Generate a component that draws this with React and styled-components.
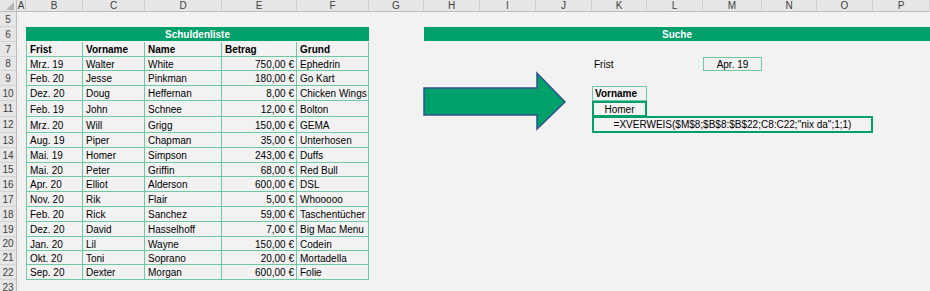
import React from "react";
import styled, { createGlobalStyle, css } from "styled-components";

const GlobalStyle = createGlobalStyle`
  html, body { margin: 0; padding: 0; background: #f2f2f2; overflow: hidden; }
  body { font-family: "Liberation Sans", Arial, sans-serif; }
`;

const COLS = [17, 9, 57, 62, 77, 75, 72, 55, 56, 56, 56, 55, 56, 59, 55, 56, 57];
const ROWS = [12, 15, 15, 15, 14, 15, 15, 16, 16, 15, 15, 14, 15, 15, 15, 15, 14, 14, 15, 15];
const LETTERS = ["A","B","C","D","E","F","G","H","I","J","K","L","M","N","O","P"];
const GREEN = "#00a06b";
const LIGHT = "#6ccaa2";

const Sheet = styled.div`
  position: relative;
  display: grid;
  grid-template-columns: ${COLS.map((c) => c + "px").join(" ")};
  grid-template-rows: ${ROWS.map((r) => r + "px").join(" ")};
  width: 930px;
  height: 291px;
  background: #f2f2f2;
  font-size: 10px;
  color: #000;
  overflow: hidden;
`;

const place = css`
  grid-column: ${(p) => p.$col} / span ${(p) => p.$span || 1};
  grid-row: ${(p) => p.$row};
`;

const ColHead = styled.div`
  ${place};
  background: #e6e6e6;
  border-right: 1px solid #cfcfcf;
  border-bottom: 1px solid #bdbdbd;
  box-sizing: border-box;
  display: flex;
  align-items: center;
  justify-content: center;
  font-size: 10px;
  color: #404040;
`;

const Corner = styled.div`
  ${place};
  background: #e6e6e6;
  border-right: 1px solid #bdbdbd;
  border-bottom: 1px solid #bdbdbd;
  box-sizing: border-box;
  display: flex;
  align-items: flex-end;
  justify-content: flex-end;
  padding: 0 2px 1px 0;
`;

const RowHead = styled.div`
  ${place};
  background: #e6e6e6;
  border-right: 1px solid #bdbdbd;
  border-bottom: 1px solid #d4d4d4;
  box-sizing: border-box;
  display: flex;
  align-items: center;
  justify-content: center;
  font-size: 10px;
  color: #404040;
`;

const Banner = styled.div`
  ${place};
  background: ${GREEN};
  color: #fff;
  font-weight: bold;
  display: flex;
  align-items: center;
  justify-content: center;
  margin-bottom: 1px;
`;

const Cell = styled.div`
  ${place};
  box-sizing: border-box;
  border-right: 1px solid ${LIGHT};
  border-bottom: 1px solid ${LIGHT};
  border-left: ${(p) => (p.$first ? `1px solid ${LIGHT}` : "none")};
  display: flex;
  align-items: center;
  justify-content: ${(p) => (p.$right ? "flex-end" : "flex-start")};
  padding: 1px 2px 0 3px;
  font-weight: ${(p) => (p.$bold ? "bold" : "normal")};
  white-space: nowrap;
  overflow: hidden;
`;

const Label = styled.div`
  ${place};
  display: flex;
  align-items: center;
  padding-left: 2px;
`;

const Box = styled.div`
  ${place};
  box-sizing: border-box;
  border: ${(p) => (p.$strong ? `2px solid ${GREEN}` : `1px solid ${LIGHT}`)};
  margin-top: ${(p) => (p.$overlap ? "-1px" : "0")};
  display: flex;
  align-items: center;
  justify-content: ${(p) => (p.$left ? "flex-start" : "center")};
  padding-left: ${(p) => (p.$left ? "2px" : "0")};
  font-weight: ${(p) => (p.$bold ? "bold" : "normal")};
  white-space: nowrap;
`;

const Arrow = styled.svg`
  position: absolute;
  left: 0;
  top: 0;
  pointer-events: none;
`;

const DATA = [
  ["Mrz. 19", "Walter", "White", "750,00 €", "Ephedrin"],
  ["Feb. 20", "Jesse", "Pinkman", "180,00 €", "Go Kart"],
  ["Dez. 20", "Doug", "Heffernan", "8,00 €", "Chicken Wings"],
  ["Feb. 19", "John", "Schnee", "12,00 €", "Bolton"],
  ["Mrz. 20", "Will", "Grigg", "150,00 €", "GEMA"],
  ["Aug. 19", "Piper", "Chapman", "35,00 €", "Unterhosen"],
  ["Mai. 19", "Homer", "Simpson", "243,00 €", "Duffs"],
  ["Mai. 20", "Peter", "Griffin", "68,00 €", "Red Bull"],
  ["Apr. 20", "Elliot", "Alderson", "600,00 €", "DSL"],
  ["Nov. 20", "Rik", "Flair", "5,00 €", "Whooooo"],
  ["Feb. 20", "Rick", "Sanchez", "59,00 €", "Taschentücher"],
  ["Dez. 20", "David", "Hasselhoff", "7,00 €", "Big Mac Menu"],
  ["Jan. 20", "Lil", "Wayne", "150,00 €", "Codein"],
  ["Okt. 20", "Toni", "Soprano", "20,00 €", "Mortadella"],
  ["Sep. 20", "Dexter", "Morgan", "600,00 €", "Folie"],
];
const HEAD = ["Frist", "Vorname", "Name", "Betrag", "Grund"];

export default function App() {
  const rowNums = [];
  for (let n = 5; n <= 23; n++) rowNums.push(n);
  return (
    <>
      <GlobalStyle />
      <Sheet>
        <Corner $col={1} $row={1}>
          <svg width="8" height="8" viewBox="0 0 8 8">
            <polygon points="8,0 8,8 0,8" fill="#b4b4b4" />
          </svg>
        </Corner>
        {LETTERS.map((l, i) => (
          <ColHead key={l} $col={i + 2} $row={1}>{l}</ColHead>
        ))}
        {rowNums.map((n) => (
          <RowHead key={n} $col={1} $row={n - 3}>{n}</RowHead>
        ))}

        <Banner $col={3} $span={5} $row={3}>Schuldenliste</Banner>
        {HEAD.map((h, i) => (
          <Cell key={h} $col={3 + i} $row={4} $bold $first={i === 0}>{h}</Cell>
        ))}
        {DATA.map((r, ri) =>
          r.map((v, ci) => (
            <Cell key={ri + "-" + ci} $col={3 + ci} $row={5 + ri} $first={ci === 0} $right={ci === 3}>
              {v}
            </Cell>
          ))
        )}

        <Banner $col={9} $span={9} $row={3}>Suche</Banner>
        <Label $col={12} $row={5}>Frist</Label>
        <Box $col={14} $row={5}>Apr. 19</Box>
        <Box $col={12} $row={7} $bold $left>Vorname</Box>
        <Box $col={12} $row={8} $strong>Homer</Box>
        <Box $col={12} $span={5} $row={9} $strong $overlap>
          =XVERWEIS($M$8;$B$8:$B$22;C8:C22;"nix da";1;1)
        </Box>

        <Arrow width="930" height="291" viewBox="0 0 930 291">
          <polygon
            points="424,88 537,88 537,73 565,102 537,129 537,115 424,115"
            fill={GREEN}
            stroke="#2f528f"
            strokeWidth="1.5"
            strokeLinejoin="miter"
          />
        </Arrow>
      </Sheet>
    </>
  );
}
